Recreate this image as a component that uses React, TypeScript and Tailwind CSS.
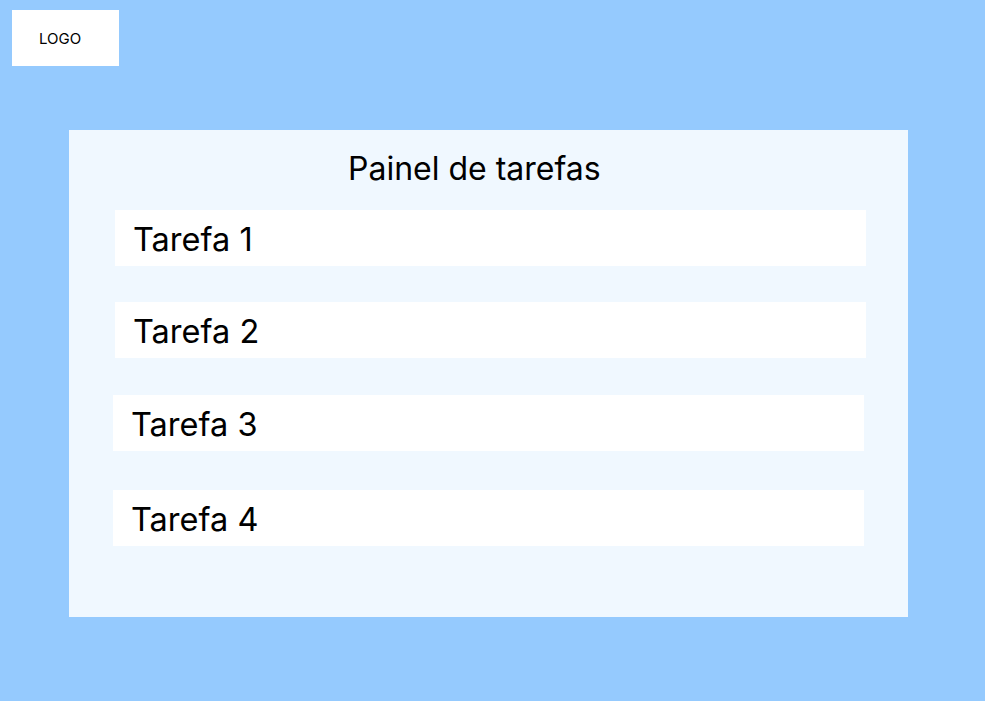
const TASKS = [
  { label: "Tarefa 1", className: "mt-[22px] ml-[46px]" },
  { label: "Tarefa 2", className: "mt-[36px] ml-[46px]" },
  { label: "Tarefa 3", className: "mt-[37px] ml-[44px]" },
  { label: "Tarefa 4", className: "mt-[39px] ml-[44px]" },
];

export default function App() {
  return (
    <div className="min-h-[701px] w-full bg-[#95cafe] pt-[10px] pl-[12px] font-['Inter',sans-serif] text-black">
      {/* Logo */}
      <div className="flex h-[56px] w-[107px] items-center bg-white pt-[3px] pl-[27px] text-[15px]">
        LOGO
      </div>

      {/* Panel */}
      <div className="mt-[64px] ml-[57px] flex h-[487px] w-[839px] flex-col bg-[#f0f8ff] pt-[19px]">
        <h1 className="ml-[279px] text-[32px] leading-[39px] font-normal">Painel de tarefas</h1>
        {TASKS.map((task) => (
          <div
            key={task.label}
            className={`flex h-[56px] w-[751px] items-center bg-white pt-[2px] pl-[18px] text-[32.5px] leading-[39px] ${task.className}`}
          >
            {task.label}
          </div>
        ))}
      </div>
    </div>
  );
}
